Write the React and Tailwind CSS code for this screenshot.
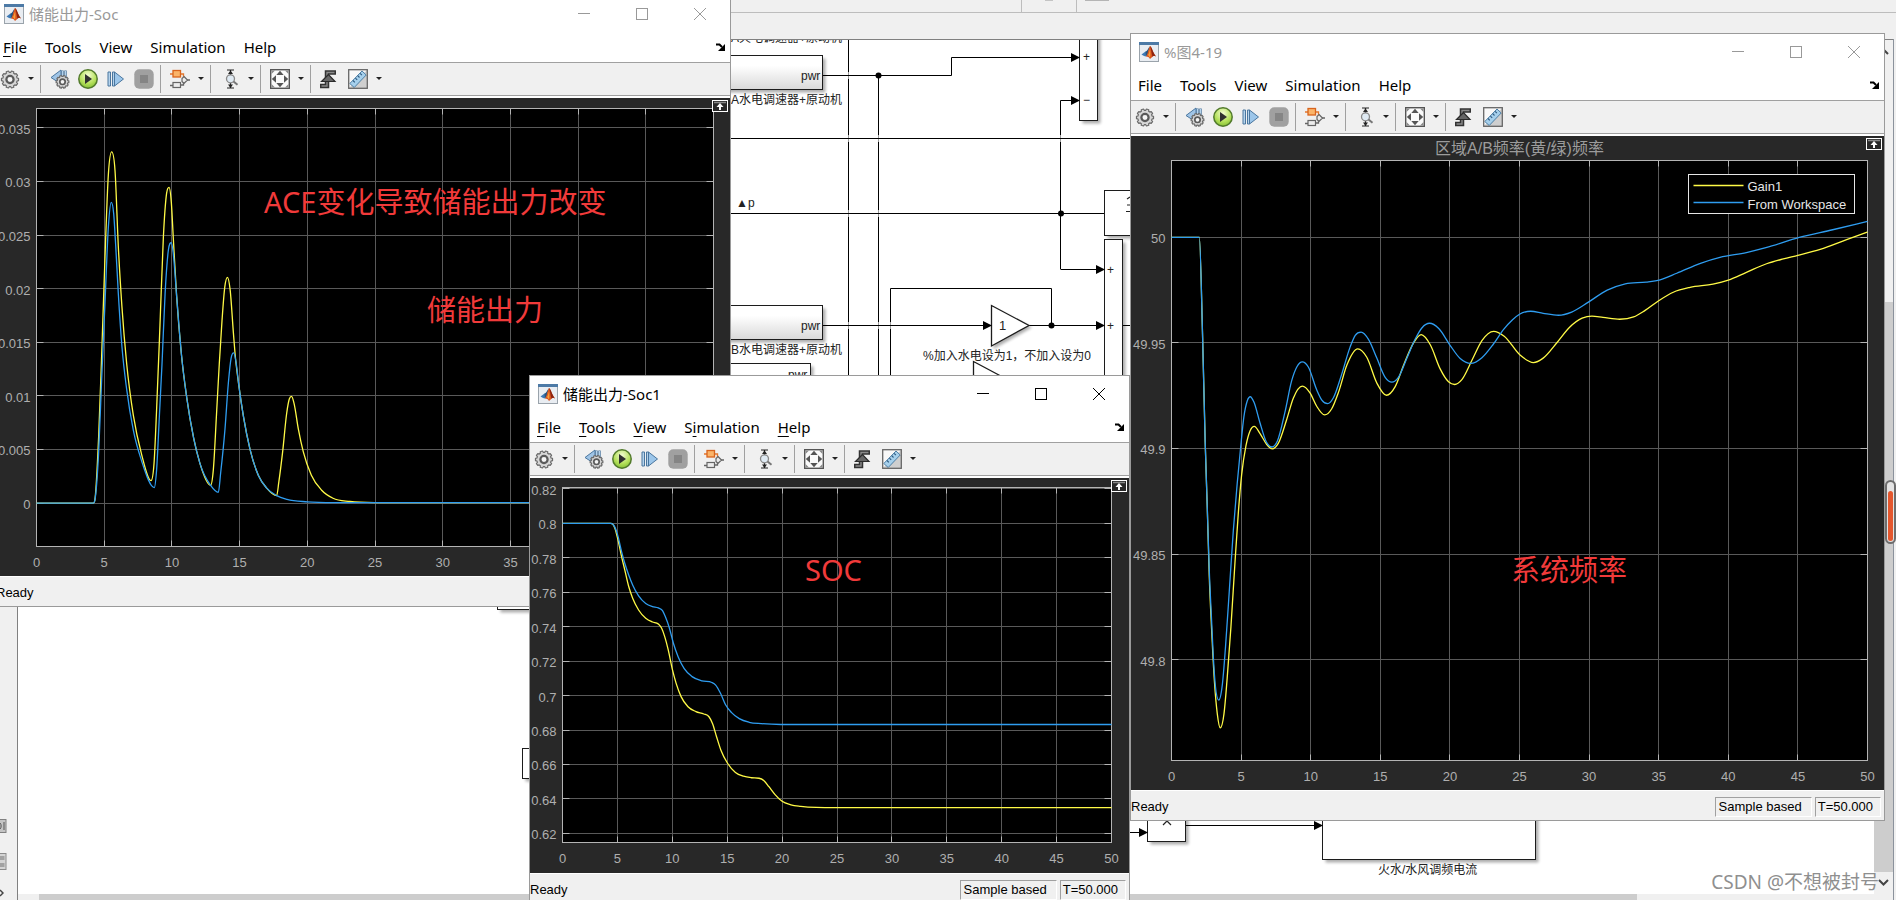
import React from 'react';

/* ---------- chart data ---------- */

const POWER_YELLOW = [[0,0],[4.2,0],[4.3,0.2],[4.59,6.2],[4.81,13.7],[5.06,23],[5.31,30.7],[5.55,32.75],[5.8,31],[6.04,24],[6.31,18.3],[6.66,13],[7.15,8.2],[7.77,4.5],[8.46,2.1],[8.68,3.7],[8.87,8.7],[9.12,16.6],[9.37,24.8],[9.61,28.9],[9.79,29.45],[9.96,28],[10.1,24.8],[10.35,19.3],[10.7,13.9],[11.1,9.8],[11.6,6.1],[12.07,3.7],[12.86,1.65],[13.06,3.1],[13.3,8.4],[13.5,13],[13.7,17],[13.9,20.1],[14.1,21.05],[14.3,19.9],[14.54,15.9],[14.66,14],[14.95,10.9],[15.28,8.1],[15.77,5],[16.38,2.6],[17,1.4],[17.74,0.7],[17.9,2],[18.18,4.8],[18.48,8.4],[18.67,9.7],[18.84,9.95],[19.02,9.3],[19.34,6.9],[19.7,4.8],[20.3,2.6],[21.06,1.2],[21.9,0.45],[23.15,0.15],[25,0.05],[50,0.05]];
const POWER_BLUE = [[0,0],[4.2,0],[4.3,0.2],[4.6,5],[4.81,11.5],[5.06,18.7],[5.31,25.8],[5.52,28.05],[5.7,27],[5.85,24],[6.04,19.6],[6.31,14.6],[6.66,10.6],[7.15,6.8],[7.77,3.9],[8.7,1.45],[8.87,3.1],[9.07,8],[9.27,13],[9.5,19.6],[9.74,23.6],[9.96,24.3],[10.1,23.3],[10.35,19.3],[10.7,13.9],[11.1,9.8],[11.6,6.1],[12.07,3.7],[12.86,1.65],[13.43,1],[13.6,2.8],[13.92,6.9],[14.17,11.2],[14.37,13.5],[14.56,14],[14.73,13.2],[14.95,10.9],[15.28,8.1],[15.77,5],[16.38,2.6],[17,1.4],[17.74,0.7],[18.5,0.35],[20,0.12],[22,0.05],[50,0.05]];

const SOC_YELLOW = [[0,0.8],[4.4,0.8],[4.77,0.7972],[5.02,0.7913],[5.38,0.7807],[5.67,0.773],[6.03,0.7633],[6.39,0.7565],[6.93,0.7497],[7.58,0.7449],[8.19,0.7427],[8.73,0.7415],[9.02,0.7392],[9.31,0.7342],[9.63,0.7265],[10,0.7153],[10.35,0.7071],[10.8,0.6994],[11.43,0.6935],[12.15,0.6907],[12.87,0.6893],[13.34,0.6877],[13.67,0.6837],[14.03,0.6761],[14.42,0.6684],[15.03,0.6607],[15.75,0.6554],[16.48,0.6532],[17.2,0.6523],[17.9,0.652],[18.35,0.6506],[18.8,0.6471],[19.36,0.6425],[20,0.6386],[20.8,0.6366],[21.7,0.6357],[23.1,0.6351],[25,0.635],[50,0.635]];
const SOC_BLUE = [[0,0.8],[4.4,0.8],[4.77,0.7978],[5.02,0.7933],[5.38,0.7836],[5.67,0.7768],[6.03,0.77],[6.39,0.7642],[6.93,0.7579],[7.58,0.7535],[8.19,0.7517],[8.73,0.7509],[9.09,0.7494],[9.38,0.7456],[9.74,0.7391],[10.1,0.7304],[10.53,0.7226],[11.07,0.7158],[11.8,0.711],[12.7,0.7085],[13.6,0.7076],[13.95,0.7061],[14.39,0.7013],[14.85,0.6947],[15.4,0.6901],[16.1,0.6866],[17,0.6845],[18.1,0.6837],[19.9,0.6832],[50,0.6832]];

const FREQ_YELLOW = [[0,50],[2,50],[2.23,49.954],[2.42,49.903],[2.57,49.872],[2.71,49.84],[2.88,49.8145],[3.09,49.789],[3.29,49.7743],[3.5,49.7677],[3.77,49.7743],[4,49.7912],[4.27,49.8155],[4.56,49.846],[4.8,49.8695],[5.04,49.8876],[5.35,49.9013],[5.64,49.9083],[5.95,49.9105],[6.35,49.9072],[6.83,49.902],[7.24,49.8998],[7.67,49.9024],[8.27,49.9136],[8.75,49.9238],[9.4,49.9295],[9.95,49.9263],[10.43,49.92],[11,49.9159],[11.5,49.9187],[12,49.9267],[12.6,49.9395],[13.38,49.9472],[14.03,49.9432],[14.75,49.931],[15.44,49.9252],[16.07,49.9293],[16.67,49.9394],[17.39,49.95],[17.94,49.9539],[18.6,49.949],[19.3,49.9377],[19.9,49.9316],[20.34,49.9303],[20.86,49.9326],[21.6,49.942],[22.3,49.9511],[23.14,49.9555],[23.9,49.9532],[25.06,49.9441],[26,49.9407],[26.7,49.9428],[27.7,49.9502],[28.6,49.9574],[29.5,49.9617],[30.2,49.9627],[31,49.9621],[32.2,49.9612],[33.2,49.9623],[34,49.9653],[35,49.97],[36.05,49.974],[37.25,49.9763],[38.9,49.9778],[40,49.9797],[41.3,49.9834],[42.75,49.9875],[43.95,49.9898],[45,49.9915],[46.6,49.9943],[48.5,49.9989],[50,50.0025]];
const FREQ_BLUE = [[0,50],[2,50],[2.23,49.954],[2.42,49.903],[2.57,49.872],[2.71,49.843],[2.88,49.8185],[3,49.8018],[3.16,49.787],[3.4,49.7808],[3.65,49.788],[3.88,49.806],[4.15,49.8324],[4.44,49.861],[4.72,49.8834],[4.96,49.9],[5.2,49.915],[5.44,49.9225],[5.66,49.9245],[5.92,49.922],[6.35,49.9123],[6.79,49.9034],[7.22,49.9007],[7.6,49.9034],[8.15,49.9172],[8.63,49.932],[9,49.9386],[9.4,49.941],[9.83,49.9386],[10.43,49.9278],[10.8,49.9229],[11.22,49.9212],[11.63,49.924],[12.2,49.9346],[12.83,49.948],[13.2,49.9536],[13.62,49.9551],[14.15,49.9517],[14.75,49.9428],[15.35,49.9337],[15.83,49.9314],[16.3,49.9337],[16.9,49.9426],[17.5,49.9517],[18,49.9572],[18.54,49.9593],[19.2,49.9568],[20,49.949],[20.74,49.9426],[21.5,49.9403],[22.3,49.943],[23.14,49.9496],[23.86,49.9564],[24.5,49.961],[25,49.9636],[25.8,49.965],[26.7,49.964],[27.8,49.9631],[28.75,49.9646],[29.95,49.9693],[31.3,49.975],[32.6,49.978],[34.1,49.9788],[35.1,49.9799],[36.3,49.983],[38,49.9877],[39.4,49.9905],[41.3,49.9928],[42.7,49.9951],[45.1,50],[47.5,50.0036],[50,50.0076]];

const YELLOW = '#fffa46';
const BLUE = '#2f9df0';

/* Shape-preserving cubic path: centred slopes, limited so that no extremum overshoots */
function curvePath(p) {
  const n = p.length;
  const h = [];
  const d = [];
  for (let i = 0; i < n - 1; i++) {
    h.push(p[i + 1][0] - p[i][0]);
    d.push((p[i + 1][1] - p[i][1]) / h[i]);
  }
  const m = [d[0]];
  for (let i = 1; i < n - 1; i++) {
    if (d[i - 1] * d[i] <= 0) {
      m.push(0);
    } else {
      const mean = (d[i - 1] * h[i] + d[i] * h[i - 1]) / (h[i - 1] + h[i]);
      const cap = 3 * Math.min(Math.abs(d[i - 1]), Math.abs(d[i]));
      m.push(Math.sign(mean) * Math.min(Math.abs(mean), cap));
    }
  }
  m.push(d[n - 2]);
  let s = `M${p[0][0].toFixed(2)} ${p[0][1].toFixed(2)}`;
  for (let i = 0; i < n - 1; i++) {
    const k = h[i] / 3;
    s += `C${(p[i][0] + k).toFixed(2)} ${(p[i][1] + m[i] * k).toFixed(2)} ${(p[i + 1][0] - k).toFixed(2)} ${(p[i + 1][1] - m[i + 1] * k).toFixed(2)} ${p[i + 1][0].toFixed(2)} ${p[i + 1][1].toFixed(2)}`;
  }
  return s;
}

const snap = (v) => Math.floor(v) + 0.5;

function Chart({ width, height, plot, yMin, yMax, yTicks, series, notes, title, legend }) {
  const [x0, y0, x1, y1] = plot;
  const sx = (t) => x0 + ((x1 - x0) * t) / 50;
  const sy = (v) => y1 - ((y1 - y0) * (v - yMin)) / (yMax - yMin);
  const xTicks = [0, 5, 10, 15, 20, 25, 30, 35, 40, 45, 50];
  return (
    <svg viewBox={`0 0 ${width} ${height}`} className="block w-full bg-[#282828]" role="img">
      <rect x={x0} y={y0} width={x1 - x0} height={y1 - y0} fill="#000" />
      <g stroke="#595959">
        {xTicks.slice(1, -1).map((t) => (
          <line key={t} x1={snap(sx(t))} x2={snap(sx(t))} y1={y0} y2={y1} />
        ))}
        {yTicks.map(([v, l]) => (
          <line key={l} x1={x0} x2={x1} y1={snap(sy(v))} y2={snap(sy(v))} />
        ))}
      </g>
      <g stroke="#b4b4b4">
        {xTicks.map((t) => (
          <path key={t} d={`M${snap(sx(t))} ${y0}v6M${snap(sx(t))} ${y1}v-6`} />
        ))}
        {yTicks.map(([v, l]) => (
          <path key={l} d={`M${x0} ${snap(sy(v))}h7M${x1} ${snap(sy(v))}h-7`} />
        ))}
        <rect x={x0} y={y0} width={x1 - x0} height={y1 - y0} fill="none" />
      </g>
      {series.map(([color, pts]) => (
        <path key={color} d={curvePath(pts.map(([t, v]) => [sx(t), sy(v)]))} fill="none" stroke={color} strokeWidth="1.3" />
      ))}
      <g fill="#afafaf" className="font-['Liberation_Sans',sans-serif] text-[13px]">
        {yTicks.map(([v, l]) => (
          <text key={l} x={x0 - 6} y={Math.round(sy(v)) + 6} textAnchor="end">{l}</text>
        ))}
        {xTicks.map((t) => (
          <text key={t} x={sx(t)} y={y1 + 20.5} textAnchor="middle">{t}</text>
        ))}
      </g>
      {title && (
        <text x={(x0 + x1) / 2} y="18" textAnchor="middle" fill="#9c9c9c" className="font-['Liberation_Sans','Noto_Sans_CJK_SC',sans-serif] text-[16px]">{title}</text>
      )}
      {legend && (
        <g>
          <rect x={x1 - 179} y={y0 + 14} width="166" height="39" fill="#000" stroke="#e6e6e6" />
          {legend.map(([color, name], i) => (
            <g key={name}>
              <line x1={x1 - 174} x2={x1 - 124} y1={y0 + 25 + 17 * i} y2={y0 + 25 + 17 * i} stroke={color} strokeWidth="1.3" />
              <text x={x1 - 120} y={y0 + 30.5 + 18 * i} fill="#e6e6e6" className="font-['Liberation_Sans',sans-serif] text-[13px]">{name}</text>
            </g>
          ))}
        </g>
      )}
      {notes.map(([text, x, y]) => (
        <text key={text} x={x} y={y} fill="#f13a3a" className="font-['Noto_Sans','Noto_Sans_CJK_SC',sans-serif] text-[29px]">{text}</text>
      ))}
    </svg>
  );
}

/* ---------- icons ---------- */

function Svg({ children, size = 20 }) {
  return (
    <svg width={size} height={size} viewBox="0 0 20 20" className="block shrink-0" aria-hidden="true">{children}</svg>
  );
}

const MatlabIcon = () => (
  <Svg>
    <rect x="0.5" y="0.5" width="19" height="19" fill="#e9edf2" stroke="#9aa3ab" />
    <rect x="0" y="0" width="20" height="3" fill="#4d7aa6" />
    <path d="M2.500 12.500 6.500 9.500 9 11.500 7 14.500 5 14z" fill="#3d79b5" />
    <path d="M6.500 9.500c2-.5 3-4 4.500-5.500L9 11.500 7 14.500z" fill="#27557f" />
    <path d="M7 14.500C9 12.500 9.500 5.500 11.200 4 13 5.500 14 11 17 14.500c-1.500-1-2.500-1-3.500.200L11 17c-1.200-1.800-2-2.500-4-2.500z" fill="#d9541e" />
    <path d="M11.200 4C13 5.500 14 11 17 14.500c-1.500-1-2.500-1-3.500.200C12.500 11 12 7 11.200 4z" fill="#8c2411" />
    <path d="M9 13c1-1.500 1.500-4 2-5.500.500 2.500.500 6 0 8z" fill="#f6a03a" />
  </Svg>
);

function gearPoints(cx, cy, r, teeth) {
  const step = (Math.PI * 2) / teeth;
  const pts = [];
  for (let i = 0; i < teeth; i++) {
    for (const [f, k] of [[-0.34, 0.84], [-0.22, 1], [0.22, 1], [0.34, 0.84]]) {
      const a = (i + f) * step;
      pts.push(`${(cx + Math.cos(a) * r * k).toFixed(2)},${(cy + Math.sin(a) * r * k).toFixed(2)}`);
    }
  }
  return pts.join(' ');
}

const Gear = ({ cx, cy, r }) => (
  <g>
    <polygon points={gearPoints(cx, cy, r, 10)} fill="#d6d6d6" stroke="#6a6a6a" strokeWidth="1.200" strokeLinejoin="round" />
    <circle cx={cx} cy={cy} r={r * 0.42} fill="#f4f4f4" stroke="#5a5a5a" strokeWidth={r * 0.26} />
  </g>
);

const SettingsIcon = () => <Svg><Gear cx={10} cy={10.5} r={8.6} /></Svg>;

const StepBackIcon = () => (
  <Svg>
    <path d="M1 8.500 11 1v14z" fill="#9fc4e6" stroke="#4a769e" />
    <path d="M12.500 1.500v9M15.500 1.500v9" stroke="#4a769e" strokeWidth="2.400" />
    <path d="M12.500 2v8M15.500 2v8" stroke="#b5d3ec" strokeWidth="1" />
    <Gear cx={12.5} cy={12.800} r={6.4} />
  </Svg>
);

const PlayIcon = () => (
  <Svg>
    <defs>
      <radialGradient id="play" cx="0.5" cy="0.3" r="0.75">
        <stop offset="0" stopColor="#f4fdd4" />
        <stop offset="0.6" stopColor="#b4e05a" />
        <stop offset="1" stopColor="#7dba30" />
      </radialGradient>
    </defs>
    <circle cx="10" cy="10" r="9.200" fill="url(#play)" stroke="#527a2c" strokeWidth="1.500" />
    <path d="M7 5v10l7-5z" fill="#303030" />
  </Svg>
);

const StepIcon = () => (
  <Svg>
    <path d="M2 3h2.500v14H2zM6.500 3v14H8.500V3z" fill="#b5d3ec" stroke="#4a769e" />
    <path d="M8.500 3v14L17.500 10z" fill="#9cc6ea" stroke="#4a769e" />
  </Svg>
);

const StopIcon = () => (
  <Svg>
    <rect x="0.300" y="0.300" width="19.400" height="19.400" rx="5" fill="#a0a0a0" />
    <rect x="6" y="6" width="8" height="8" fill="#858585" />
  </Svg>
);

const SignalIcon = () => (
  <Svg>
    <path d="M0 16.500h3M10 16h3.500v-3M17 11h3" stroke="#666" fill="none" strokeWidth="1.300" />
    <path d="M0 5h3M10 5h3.500v3" stroke="#e2762c" fill="none" strokeWidth="1.300" />
    <rect x="3" y="1.500" width="7.500" height="6.500" fill="#fbb469" stroke="#d8641e" strokeWidth="1.300" />
    <rect x="3" y="13.500" width="7.500" height="5" fill="#ececec" stroke="#666" strokeWidth="1.200" />
    <path d="m14 7.500 3.500 3.500-3.500 3.500-2-2v-3z" fill="#ececec" stroke="#666" strokeWidth="1.200" />
  </Svg>
);

const ZoomAxisIcon = () => (
  <Svg>
    <path d="M7 1h7M7 19h7M10.500 1v5M10.500 14v5" stroke="#222" strokeWidth="1.200" />
    <path d="M8 5h5l-2.500-3.500zM8 15.500h5L10.500 19z" fill="#222" />
    <circle cx="10.500" cy="9.800" r="4" fill="#dfeaf3" stroke="#888" strokeWidth="1.300" />
    <path d="m13.500 12.500 4 3.200" stroke="#777" strokeWidth="2" />
  </Svg>
);

const FitIcon = () => (
  <Svg>
    <rect x="0.700" y="0.700" width="18.600" height="18.600" fill="#fafafa" stroke="#555" strokeWidth="1.400" />
    <path d="M10 1.800 6.300 6h7.400zM10 18.200l3.700-4.200H6.300zM1.800 10 6 6.300v7.400zM18.200 10 14 13.700V6.300z" fill="#555" />
    <path d="M1.500 1.500H5L1.500 5zM18.500 1.500V5L15 1.500zM1.500 18.500V15L5 18.500zM18.500 18.500H15l3.500-3.500z" fill="#8a8a8a" />
  </Svg>
);

const TriggerIcon = () => (
  <Svg>
    <path d="M0 17h7V3.500h9" fill="none" stroke="#333" strokeWidth="4.500" />
    <path d="M1.500 17h5.500V3.500h7.500" fill="none" stroke="#8a8a8a" strokeWidth="1.400" />
    <path d="M8.500 5.500 1.500 12.500H15z" fill="#666" stroke="#2b2b2b" strokeWidth="1.200" />
  </Svg>
);

const MeasureIcon = () => (
  <Svg>
    <rect x="0.700" y="0.700" width="18.600" height="18.600" fill="#f8f8f8" />
    <path d="M19.300 0.700v18.600H.700z" fill="#cfcfcf" />
    <path d="m1.800 14.500 12.200-12.500 4.200 4-12 12.500z" fill="#a6d0ec" stroke="#4d7fa6" />
    <path d="m5 11.500 1.800 1.800m.600-4.200 1.800 1.800m.500-4.200 1.800 1.800m.600-4.200 1.800 1.800" stroke="#2d5a80" strokeWidth="1.100" />
    <rect x="0.700" y="0.700" width="18.600" height="18.600" fill="none" stroke="#666" strokeWidth="1.300" />
  </Svg>
);

/* ---------- window parts ---------- */

function Caret({ label }) {
  return (
    <button aria-label={label} className="ml-[3px] flex h-6 w-4 items-center justify-center">
      <svg width="6" height="3" viewBox="0 0 6 3" aria-hidden="true"><path d="M0 0h6L3 3z" fill="#222" /></svg>
    </button>
  );
}

function Tool({ label, children }) {
  return <button aria-label={label} className="flex h-6 w-5 items-center justify-center">{children}</button>;
}

function Group({ children, first }) {
  return (
    <div className={first ? 'flex items-center pr-px' : 'flex h-7 items-center border-l border-[#a0a0a0] pr-px pl-[9px]'}>
      {children}
    </div>
  );
}

function Toolbar() {
  return (
    <div role="toolbar" aria-label="Scope tools" className="flex h-9 shrink-0 items-center border-t border-[#a0a0a0] bg-[#f0f0f0] pb-1 pl-1 shadow-[inset_0_-2px_0_#ffffff,inset_0_-3px_0_#a0a0a0]">
      <Group first>
        <Tool label="Settings"><SettingsIcon /></Tool>
        <Caret label="Settings menu" />
      </Group>
      <Group>
        <div className="flex gap-2 pr-[5px]">
          <Tool label="Step back"><StepBackIcon /></Tool>
          <Tool label="Run"><PlayIcon /></Tool>
          <Tool label="Step forward"><StepIcon /></Tool>
          <Tool label="Stop"><StopIcon /></Tool>
        </div>
      </Group>
      <Group>
        <Tool label="Highlight block"><SignalIcon /></Tool>
        <Caret label="Highlight menu" />
      </Group>
      <Group>
        <Tool label="Zoom"><ZoomAxisIcon /></Tool>
        <Caret label="Zoom menu" />
      </Group>
      <Group>
        <Tool label="Fit to view"><FitIcon /></Tool>
        <Caret label="Fit menu" />
      </Group>
      <Group>
        <div className="flex gap-2">
          <Tool label="Triggers"><TriggerIcon /></Tool>
          <Tool label="Measurements"><MeasureIcon /></Tool>
        </div>
        <Caret label="Measurements menu" />
      </Group>
    </div>
  );
}

const MENUS = [['File', 0], ['Tools', 0], ['View', 0], ['Simulation', 1], ['Help', 0]];

function MenuBar({ underlined }) {
  return (
    <div className="flex h-[30px] shrink-0 items-center justify-between pr-[5px] pl-[7px]">
      <div className="flex gap-[18px]">
        {MENUS.map(([name, k]) => (
          <button key={name} className="text-[15px] leading-5 text-black">
            {underlined.includes(name) ? (
              <>{name.slice(0, k)}<span className="underline underline-offset-3">{name[k]}</span>{name.slice(k + 1)}</>
            ) : name}
          </button>
        ))}
      </div>
      <button aria-label="Dock window">
        <svg width="9" height="8" viewBox="0 0 9 8" className="block" aria-hidden="true">
          <path d="M0 1.500h3.500L6 4" fill="none" stroke="#000" strokeWidth="2" />
          <path d="M9 1v7H2z" fill="#000" />
        </svg>
      </button>
    </div>
  );
}

function WindowButtons() {
  return (
    <div className="flex h-full pr-px">
      <button aria-label="Minimize" className="flex w-[58px] items-center justify-center">
        <svg width="12" height="12" viewBox="0 0 12 12" stroke="currentColor"><path d="M0 5.500h12" /></svg>
      </button>
      <button aria-label="Maximize" className="flex w-[58px] items-center justify-center">
        <svg width="12" height="12" viewBox="0 0 12 12" stroke="currentColor" fill="none"><rect x="0.500" y="0.500" width="11" height="11" /></svg>
      </button>
      <button aria-label="Close" className="flex w-[58px] items-center justify-center">
        <svg width="12" height="12" viewBox="0 0 12 12" stroke="currentColor"><path d="m0 0 12 12M12 0 0 12" /></svg>
      </button>
    </div>
  );
}

function ScopeWindow({ title, active, underlined = [], place, children }) {
  return (
    <section aria-label={title} className={`absolute flex flex-col border border-[#9a9a9a] bg-white ${place}`}>
      <header className={active ? 'flex h-9 shrink-0 items-center justify-between pl-2 text-black' : 'flex h-9 shrink-0 items-center justify-between pl-2 text-[#999999]'}>
        <div className="flex items-center gap-[5px]">
          <MatlabIcon />
          <h2 className="text-[15px] leading-5">{title}</h2>
        </div>
        <WindowButtons />
      </header>
      <MenuBar underlined={underlined} />
      <Toolbar />
      <div className="relative">
        {children}
        <button aria-label="Maximize axes" className="absolute top-[2px] right-[2px] flex h-3 w-4 items-center justify-center border border-white bg-[#282828]">
          <svg width="14" height="10" viewBox="0 0 14 10" aria-hidden="true">
            <path d="M1 1.500h12" stroke="#8a8a8a" strokeWidth="1.500" />
            <path d="M7 2 3.500 6H6v3h2V6h2.500z" fill="#fff" />
          </svg>
        </button>
      </div>
      <footer className="flex h-[30px] shrink-0 items-center justify-between border-t border-white bg-[#f0f0f0] pt-[2px] pr-[3px] font-['Liberation_Sans',sans-serif] text-[13px] leading-4 text-black">
        <span>Ready</span>
        <div className="flex gap-[3px]">
          <span className="border border-r-white border-b-white border-l-[#a0a0a0] border-t-[#a0a0a0] py-px pr-[9px] pl-[3px]">Sample based</span>
          <span className="border border-r-white border-b-white border-l-[#a0a0a0] border-t-[#a0a0a0] py-px pr-[7px] pl-[2px]">T=50.000</span>
        </div>
      </footer>
    </section>
  );
}

/* ---------- model canvas behind the scopes ---------- */

const Arrow = ({ x, y }) => <path d={`M${x} ${y}l-9-4.500v9z`} fill="#000" />;
const Dot = ({ x, y }) => <circle cx={x} cy={y} r="3" fill="#000" />;

function Block({ x, y, w, h, fill = '#fff' }) {
  return (
    <g>
      <rect x={x + 3} y={y + 3} width={w} height={h} fill="#000" opacity="0.32" filter="url(#soft)" />
      <rect x={x} y={y} width={w} height={h} fill={fill} stroke="#1c1c1c" />
    </g>
  );
}

function ModelDiagram() {
  return (
    <svg width="1896" height="900" viewBox="0 0 1896 900" className="absolute top-0 left-0" role="img" aria-label="Simulink model">
      <defs>
        <linearGradient id="blockfill" x1="0" y1="0" x2="0" y2="1">
          <stop offset="0.300" stopColor="#fff" />
          <stop offset="1" stopColor="#d9d9d9" />
        </linearGradient>
        <filter id="soft" x="-20%" y="-20%" width="140%" height="140%"><feGaussianBlur stdDeviation="1.500" /></filter>
        <clipPath id="canvas"><rect x="18" y="40" width="1855" height="854" /></clipPath>
      </defs>
      <g clipPath="url(#canvas)">
        <g fill="none" stroke="#000">
          <path d="M848.500 40V376M878.500 75.500V376M1060.500 269V100.500H1072M890.500 376V288.500H1051.500V325.500" />
          <path d="M848.500 72v7M848.500 135v7M878.500 135v7M1060.500 135v7M848.500 210v7M878.500 210v7M848.500 322v7M878.500 322v7M890.500 322v7" stroke="#fff" strokeWidth="3" opacity="0.600" />
          <path d="M823 75.500H951.500V57.500H1072M700 138.500H1140M700 213.500H1104M1060.500 269.500H1096M823 325.500H984M1029 325.500H1096M1123 325.500H1140M811 375.500H828" />
          <path d="M1130 832.500H1140M1185 825.500H1314" />
        </g>
        <Block x={690.5} y={55.5} w={132} h={34} fill="url(#blockfill)" />
        <Block x={690.5} y={305.5} w={132} h={34} fill="url(#blockfill)" />
        <Block x={690.5} y={363.5} w={120} h={34} fill="url(#blockfill)" />
        <Block x={1079.5} y={20.5} w={18} h={100} />
        <Block x={1104.5} y={190.5} w={60} h={45} />
        <Block x={1104.5} y={239.5} w={18} h={180} />
        <Block x={497.5} y={580.5} w={60} h={29} />
        <Block x={522.5} y={748.500} w={60} h={30} />
        <Block x={1147.5} y={800.5} w={38} h={41} />
        <Block x={1322.5} y={780.5} w={213} h={79} />
        <path d="M993.500 308.500 1032 327.500 993.500 349z" fill="#000" opacity="0.320" filter="url(#soft)" />
        <path d="M991.500 305.500 1029 325.500 991.500 346z" fill="#fff" stroke="#1c1c1c" strokeWidth="1.300" />
        <path d="M973.500 361.500 1011 381.500 973.500 402z" fill="#fff" stroke="#1c1c1c" strokeWidth="1.300" />
        <Arrow x={1080} y={57.5} />
        <Arrow x={1080} y={100.5} />
        <Arrow x={1105} y={269.5} />
        <Arrow x={1105} y={325.500} />
        <Arrow x={992} y={325.500} />
        <Arrow x={1148} y={832.500} />
        <Arrow x={1323} y={825.500} />
        <Dot x={878.5} y={75.500} />
        <Dot x={1061} y={213.500} />
        <Dot x={1051.5} y={325.500} />
        <path d="m1163 817 8 8m0-8-8 8M1127 199l3-2M1127 205h4M1126 211.500h5" stroke="#222" strokeWidth="1.200" />
        <g className="font-['Liberation_Sans','Noto_Sans_CJK_SC',sans-serif] text-[12px]" fill="#222">
          <text x="842" y="42" textAnchor="end">A火电调速器+原动机</text>
          <text x="842" y="104" textAnchor="end">A水电调速器+原动机</text>
          <text x="842" y="354" textAnchor="end">B水电调速器+原动机</text>
          <text x="801" y="80">pwr</text>
          <text x="801" y="330">pwr</text>
          <text x="788" y="379">pwr</text>
          <text x="736" y="207">▲p</text>
          <text x="999" y="330" className="text-[13px]">1</text>
          <text x="923" y="360">%加入水电设为1，不加入设为0</text>
          <text x="1378" y="874">火水/水风调频电流</text>
          <text x="1083" y="61">+</text>
          <text x="1083" y="104">−</text>
          <text x="1107" y="274">+</text>
          <text x="1107" y="330">+</text>
        </g>
      </g>
    </svg>
  );
}

function ModelWindow() {
  return (
    <div className="flex h-full flex-col">
      <div className="flex h-[13px] shrink-0 justify-center border-b border-[#bdbdbd] pl-[233px]">
        <div className="flex h-3 w-14 justify-center border-x border-[#bdbdbd]"><span className="h-px w-2 bg-[#c4c4c4]" /></div>
        <span className="ml-2 h-px w-6 bg-[#b5b5b5]" />
      </div>
      <div className="h-[26px] shrink-0" />
      <div className="mr-[2px] flex min-h-0 flex-1 border-r border-[#8b929c]">
        <div className="flex w-[17px] shrink-0 flex-col justify-end">
          <svg width="7" height="14" viewBox="0 0 7 14" aria-hidden="true"><rect x="-3" y="0.500" width="9" height="13" fill="#c4c4c4" stroke="#808080" /><path d="M0 4c1.500 1 1.500 5 0 6M4 3v8" fill="none" stroke="#555" /></svg>
          <svg width="7" height="17" viewBox="0 0 7 17" className="mt-5" aria-hidden="true"><rect x="-3" y="0.500" width="9" height="16" fill="#d4d4d4" stroke="#8c8c8c" /><path d="M0 3h4.500v4H0zM0 10h4.500v4H0z" fill="#a2a2a2" /></svg>
          <svg width="4" height="8" viewBox="0 0 4 8" className="mt-[19px] mb-[3px]" aria-hidden="true"><path d="m0 1 3 3-3 3" fill="none" stroke="#444" strokeWidth="1.500" /></svg>
        </div>
        <div className="flex min-w-0 flex-1 flex-col border-t border-l border-[#808080]">
          <div className="flex min-h-0 flex-1">
            <div className="flex-1 bg-white" />
            <div className="flex w-[19px] shrink-0 flex-col">
              <div className="h-[262px]">
                <svg width="19" height="20" viewBox="0 0 19 20" aria-hidden="true"><path d="m5 14 4.500-4.500L14 14" fill="none" stroke="#444" strokeWidth="2" /></svg>
              </div>
              <div className="flex-1 bg-[#cdcdcd]" />
              <svg width="19" height="22" viewBox="0 0 19 22" aria-hidden="true"><path d="m5 8 4.500 4.500L14 8" fill="none" stroke="#444" strokeWidth="2" /></svg>
            </div>
          </div>
          <div className="flex h-[6px] shrink-0 pr-64 pl-[21px]"><div className="flex-1 bg-[#cdcdcd]" /></div>
        </div>
      </div>
    </div>
  );
}

/* ---------- page ---------- */

const POWER_TICKS = [0, 5, 10, 15, 20, 25, 30, 35].map((v) => [v, String(v / 1000)]);
const SOC_TICKS = [0.62, 0.64, 0.66, 0.68, 0.7, 0.72, 0.74, 0.76, 0.78, 0.8, 0.82].map((v) => [v, String(v)]);
const FREQ_TICKS = [49.8, 49.85, 49.9, 49.95, 50].map((v) => [v, String(v)]);

export default function App() {
  return (
    <main className="relative h-screen w-full overflow-hidden bg-[#f0f0f0] font-['Noto_Sans','Noto_Sans_CJK_SC',sans-serif]">
      <ModelWindow />
      <ModelDiagram />

      <ScopeWindow title="储能出力-Soc" underlined={['File']} place="top-[-5px] left-[-5px] w-[736px]">
        <Chart
          width={734} height={478} plot={[40.5, 10.5, 717.5, 448.5]}
          yMin={-4.05} yMax={36.8} yTicks={POWER_TICKS}
          series={[[YELLOW, POWER_YELLOW], [BLUE, POWER_BLUE]]}
          notes={[['ACE变化导致储能出力改变', 268, 115], ['储能出力', 431, 223]]}
        />
      </ScopeWindow>

      <ScopeWindow title="%图4-19" place="top-[33px] left-[1130px] w-[755px]">
        <Chart
          width={753} height={654} plot={[40.5, 24.5, 736.5, 624.5]}
          yMin={49.7522} yMax={50.0364} yTicks={FREQ_TICKS}
          series={[[YELLOW, FREQ_YELLOW], [BLUE, FREQ_BLUE]]}
          title="区域A/B频率(黄/绿)频率"
          legend={[[YELLOW, 'Gain1'], [BLUE, 'From Workspace']]}
          notes={[['系统频率', 380, 445]]}
        />
      </ScopeWindow>

      <ScopeWindow title="储能出力-Soc1" active underlined={['File', 'Tools', 'View', 'Simulation', 'Help']} place="top-[375px] left-[529px] w-[601px]">
        <Chart
          width={599} height={395} plot={[32.5, 9.5, 581.5, 364.5]}
          yMin={0.6147} yMax={0.8208} yTicks={SOC_TICKS}
          series={[[YELLOW, SOC_YELLOW], [BLUE, SOC_BLUE]]}
          notes={[['SOC', 275, 103]]}
        />
      </ScopeWindow>

      <div className="absolute top-[480px] right-0 h-16 w-[11px] rounded-md border-2 border-[#6d6d6d] bg-[#e4e4e4] px-px pt-[9px] pb-px">
        <div className="h-full rounded-full bg-[#e4572e]" />
      </div>
      <p className="absolute right-[17px] bottom-[4px] text-[19px] leading-7 text-[#8f8f8f]">CSDN @不想被封号</p>
    </main>
  );
}
